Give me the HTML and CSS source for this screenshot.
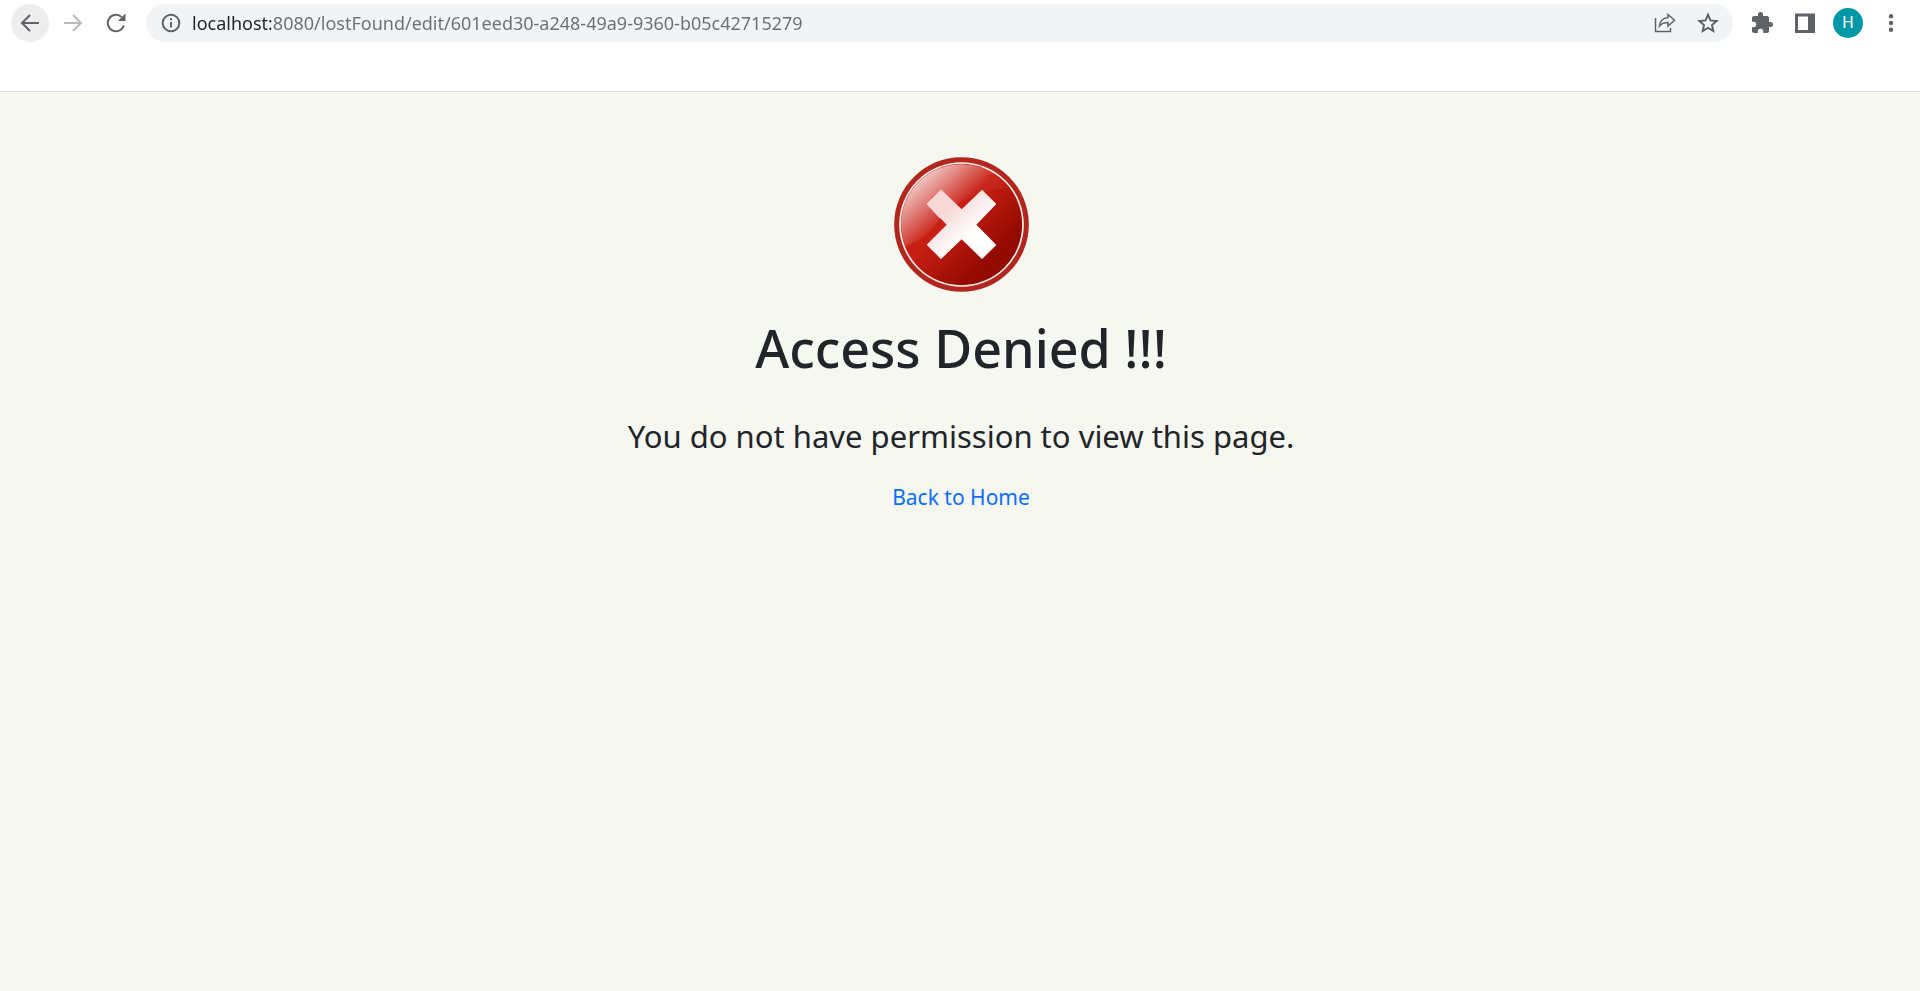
FILE: index.html
```html
<!DOCTYPE html>
<html lang="en">
<head>
<meta charset="utf-8">
<meta name="viewport" content="width=device-width, initial-scale=1">
<title>Access Denied</title>
<link rel="stylesheet" href="styles.css">
</head>
<body>
<header class="toolbar">
  <button class="tool tool-active" type="button" aria-label="Back">
    <svg class="icon" viewBox="0 0 22 22"><path class="line" d="M20 11H3M11 3L3 11l8 8"/></svg>
  </button>
  <button class="tool tool-muted" type="button" aria-label="Forward">
    <svg class="icon" viewBox="0 0 22 22"><path class="line" d="M2 11h17M11 3l8 8-8 8"/></svg>
  </button>
  <button class="tool" type="button" aria-label="Reload">
    <svg class="icon" viewBox="0 0 22 22"><path class="line" d="M18.800 13.500A8.200 8.200 0 1 1 16.700 5.100"/><path class="solid" d="M20.500 1.500V9H13z"/></svg>
  </button>
  <form class="address">
    <button class="address-tool" type="button" aria-label="Site information">
      <svg class="icon" viewBox="0 0 22 22"><circle class="line" cx="11" cy="11" r="8.300"/><path class="solid" d="M10 10h2v5.500h-2zM10 6.300h2v2h-2z"/></svg>
    </button>
    <input class="url" type="text" aria-label="Address" spellcheck="false" value="localhost:8080/lostFound/edit/601eed30-a248-49a9-9360-b05c42715279">
    <button class="address-tool" type="button" aria-label="Share">
      <svg class="icon" viewBox="0 0 22 22"><path class="thin" d="M1.500 6v13.500h15V16"/><path class="thin" d="M14 2.500l6.500 5.700L14 14v-3.500c-4 0-6.500 1-8.500 3.500.5-4.500 3.500-8 8.500-8.500z"/></svg>
    </button>
    <button class="address-tool" type="button" aria-label="Bookmark">
      <svg class="icon" viewBox="0 0 22 22"><path class="star" d="M11 2.800l2.500 5.600 6.100.6-4.600 4.100 1.300 6L11 16l-5.300 3.100 1.300-6L2.400 9l6.100-.6z"/></svg>
    </button>
  </form>
  <button class="tool" type="button" aria-label="Extensions">
    <svg class="icon" viewBox="1 1 22 22"><path class="solid" d="M20.500 11H19V7c0-1.100-.9-2-2-2h-4V3.500a2.500 2.500 0 0 0-5 0V5H4c-1.100 0-2 .9-2 2v3.800h1.500a2.700 2.700 0 0 1 0 5.400H2V20c0 1.100.9 2 2 2h3.800v-1.500a2.700 2.700 0 0 1 5.400 0V22H17c1.100 0 2-.9 2-2v-4h1.500a2.500 2.500 0 0 0 0-5z"/></svg>
  </button>
  <button class="tool" type="button" aria-label="Side panel">
    <svg class="icon" viewBox="0 0 22 22"><path class="solid" fill-rule="evenodd" d="M1 1.500h20v19.500H1zM4 4.500V18h10V4.500z"/></svg>
  </button>
  <button class="tool" type="button" aria-label="Profile"><span class="avatar">H</span></button>
  <button class="tool" type="button" aria-label="Menu">
    <svg class="icon" viewBox="0 0 22 22"><g class="solid"><circle cx="11" cy="4.300" r="2.200"/><circle cx="11" cy="11" r="2.200"/><circle cx="11" cy="17.800" r="2.200"/></g></svg>
  </button>
</header>
<main class="page">
  <svg class="denied" viewBox="42 36 405 405" aria-hidden="true">
    <defs>
      <linearGradient id="base" x1="0.15" y1="0.15" x2="0.85" y2="0.85">
        <stop offset="0.4" stop-color="#c81e12"/><stop offset="0.88" stop-color="#930a00"/>
      </linearGradient>
      <linearGradient id="gloss" gradientUnits="userSpaceOnUse" x1="115" y1="105" x2="210" y2="210">
        <stop offset="0" stop-color="#fff" stop-opacity="0.76"/><stop offset="1" stop-color="#fff" stop-opacity="0.04"/>
      </linearGradient>
      <linearGradient id="cross" gradientUnits="userSpaceOnUse" x1="165" y1="150" x2="270" y2="270">
        <stop offset="0" stop-color="#f6d5d4"/><stop offset="0.45" stop-color="#f7dedd"/><stop offset="1" stop-color="#fff"/>
      </linearGradient>
      <clipPath id="disc"><circle cx="244.500" cy="238.500" r="181"/></clipPath>
    </defs>
    <circle cx="244.500" cy="238.500" r="202" fill="#b3261d"/>
    <circle cx="244.500" cy="238.500" r="187" fill="#fff0ef"/>
    <circle cx="244.500" cy="238.500" r="182" fill="url(#base)"/>
    <path clip-path="url(#disc)" fill="url(#gloss)" d="M40 315Q130 292 166 240Q245 130 410 128V30H40z"/>
    <path fill="url(#cross)" d="M183 134l62 59 61-59 43 43-60 62 60 61-43 42-61-59-62 59-43-43 60-60-60-62z"/>
    <path fill="#f7d8d7" d="M183 134l48 46q-29 17-52 40l-39-43z"/>
  </svg>
  <h1 class="title">Access Denied !!!</h1>
  <p class="message">You do not have permission to view this page.</p>
  <a class="home" href="/">Back to Home</a>
</main>
</body>
</html>
```

FILE: styles.css
```css
* { box-sizing: border-box; }

body {
  margin: 0;
  min-height: 100vh;
  display: flex;
  flex-direction: column;
  font-family: "Noto Sans", "Open Sans", sans-serif;
  color: #212529;
  background: #f6f7f0;
}

.toolbar {
  display: flex;
  align-items: flex-start;
  gap: 5px;
  height: 92px;
  padding: 4px 10px 4px 11px;
  background: #fff;
  border-bottom: 1px solid #d9d9d9;
}

button {
  border: 0;
  padding: 0;
  background: none;
  color: #5f6368;
  font: inherit;
}

.tool {
  flex: none;
  display: flex;
  align-items: center;
  justify-content: center;
  width: 38px;
  height: 38px;
  border-radius: 50%;
}

.tool-active { background: #ededee; }
.tool-muted { color: #b9bbbe; }

.icon {
  display: block;
  width: 22px;
  height: 22px;
}

.line, .thin, .star {
  fill: none;
  stroke: currentColor;
  stroke-width: 2;
}

.thin { stroke-width: 1.5; }
.solid { fill: currentColor; }

.address {
  flex: 1;
  display: flex;
  align-items: center;
  min-width: 0;
  height: 38px;
  margin: 0 5px 0 6px;
  padding: 0 14px;
  gap: 21px;
  border-radius: 19px;
  background: #f1f3f4;
}

.address-tool { flex: none; }

.url {
  flex: 1;
  min-width: 0;
  height: 100%;
  margin-left: -11px;
  padding: 0;
  border: 0;
  outline: 0;
  font-family: "Noto Sans", "Open Sans", sans-serif;
  font-size: 18px;
  color: transparent;
  background: linear-gradient(to right, #202124 79px, #6b6e72 79px);
  -webkit-background-clip: text;
  background-clip: text;
}

.avatar {
  width: 30px;
  height: 30px;
  border-radius: 50%;
  background: #0097a7;
  color: #fff;
  font-family: Roboto, sans-serif;
  font-size: 16px;
  line-height: 30px;
  text-align: center;
}

.page {
  flex: 1;
  display: flex;
  flex-direction: column;
  align-items: center;
  padding: 65px 16px 65px 18px;
  text-align: center;
}

.denied {
  width: 135px;
  height: 135px;
}

.title {
  margin: 22px 0 0;
  font-size: 52px;
  font-weight: 500;
  line-height: 68px;
}

.message {
  margin: 34px 0 0;
  font-size: 31px;
  font-weight: 400;
  line-height: 40px;
}

.home {
  margin-top: 26px;
  font-size: 21px;
  line-height: 30px;
  color: #0d6efd;
  text-decoration: none;
}
```
